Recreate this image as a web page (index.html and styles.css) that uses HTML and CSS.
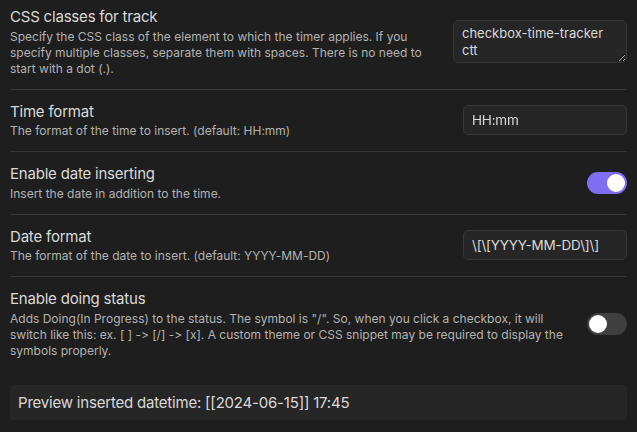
FILE: index.html
```html
<!DOCTYPE html>
<html>
<head>
<meta charset="utf-8">
<link rel="stylesheet" href="styles.css">
</head>
<body>
<div class="settings">
  <div class="setting-item first">
    <div class="setting-info">
      <div class="setting-name">CSS classes for track</div>
      <div class="setting-desc">Specify the CSS class of the element to which the timer applies. If you specify multiple classes, separate them with spaces. There is no need to start with a dot (.).</div>
    </div>
    <div class="setting-control">
      <textarea class="field area" spellcheck="false">checkbox-time-tracker ctt</textarea>
    </div>
  </div>
  <div class="setting-item">
    <div class="setting-info">
      <div class="setting-name">Time format</div>
      <div class="setting-desc">The format of the time to insert. (default: HH:mm)</div>
    </div>
    <div class="setting-control">
      <input class="field" type="text" value="HH:mm">
    </div>
  </div>
  <div class="setting-item">
    <div class="setting-info">
      <div class="setting-name">Enable date inserting</div>
      <div class="setting-desc">Insert the date in addition to the time.</div>
    </div>
    <div class="setting-control">
      <div class="toggle on"><span class="knob"></span></div>
    </div>
  </div>
  <div class="setting-item">
    <div class="setting-info">
      <div class="setting-name">Date format</div>
      <div class="setting-desc">The format of the date to insert. (default: YYYY-MM-DD)</div>
    </div>
    <div class="setting-control">
      <input class="field" type="text" value="\[\[YYYY-MM-DD\]\]">
    </div>
  </div>
  <div class="setting-item">
    <div class="setting-info">
      <div class="setting-name">Enable doing status</div>
      <div class="setting-desc">Adds Doing(In Progress) to the status. The symbol is "/". So, when you click a checkbox, it will switch like this: ex. [ ] -&gt; [/] -&gt; [x]. A custom theme or CSS snippet may be required to display the symbols properly.</div>
    </div>
    <div class="setting-control">
      <div class="toggle"><span class="knob"></span></div>
    </div>
  </div>
  <div class="preview">Preview inserted datetime: [[2024-06-15]] 17:45</div>
</div>
</body>
</html>
```

FILE: styles.css
```css
html, body {
  margin: 0;
  padding: 0;
  background: #1e1e1e;
  height: 100%;
  overflow: hidden;
}
body {
  font-family: Inter, "Noto Sans", sans-serif;
  font-variant-ligatures: none;
  font-feature-settings: "calt" 0, "liga" 0;
  color: #dadada;
  -webkit-font-smoothing: antialiased;
}
.settings {
  padding: 0 10px;
}
.setting-item {
  display: flex;
  align-items: center;
  padding: 12px 0;
  border-top: 1px solid #363636;
}
.setting-item.first {
  border-top: none;
  padding-top: 7px;
}
.setting-info {
  flex: 1 1 auto;
  margin-right: 16px;
}
.setting-name {
  font-size: 15px;
  line-height: 19.5px;
  color: #dadada;
  letter-spacing: -0.2px;
}
.setting-desc {
  font-size: 12px;
  line-height: 16px;
  padding-top: 2px;
  color: #b3b3b3;
}
.setting-control {
  flex: 0 0 auto;
  display: flex;
  justify-content: flex-end;
  align-items: center;
}
.field {
  box-sizing: border-box;
  width: 164px;
  height: 30px;
  padding: 4px 8px;
  background: #262626;
  border: 1px solid #363636;
  border-radius: 5px;
  color: #dadada;
  font-family: Inter, "Noto Sans", sans-serif;
  font-variant-ligatures: none;
  font-feature-settings: "calt" 0, "liga" 0;
  font-size: 13.5px;
  letter-spacing: -0.2px;
  outline: none;
  margin: 0;
}
.field.area {
  width: 174px;
  height: 43px;
  padding: 4px 8px;
  line-height: 17px;
  font-size: 13px;
  letter-spacing: 0;
  resize: vertical;
  display: block;
}
.toggle {
  position: relative;
  width: 40px;
  height: 22px;
  border-radius: 11px;
  background: #3f3f3f;
}
.toggle.on {
  background: #7f6df2;
}
.knob {
  position: absolute;
  top: 2px;
  left: 2px;
  width: 18px;
  height: 18px;
  border-radius: 50%;
  background: #ffffff;
}
.toggle.on .knob {
  left: 20px;
}
.preview {
  margin-top: 14px;
  background: #262626;
  border-radius: 4px;
  padding: 0 8px;
  height: 35px;
  line-height: 35px;
  font-size: 15px;
  letter-spacing: -0.2px;
  color: #dadada;
}
```
